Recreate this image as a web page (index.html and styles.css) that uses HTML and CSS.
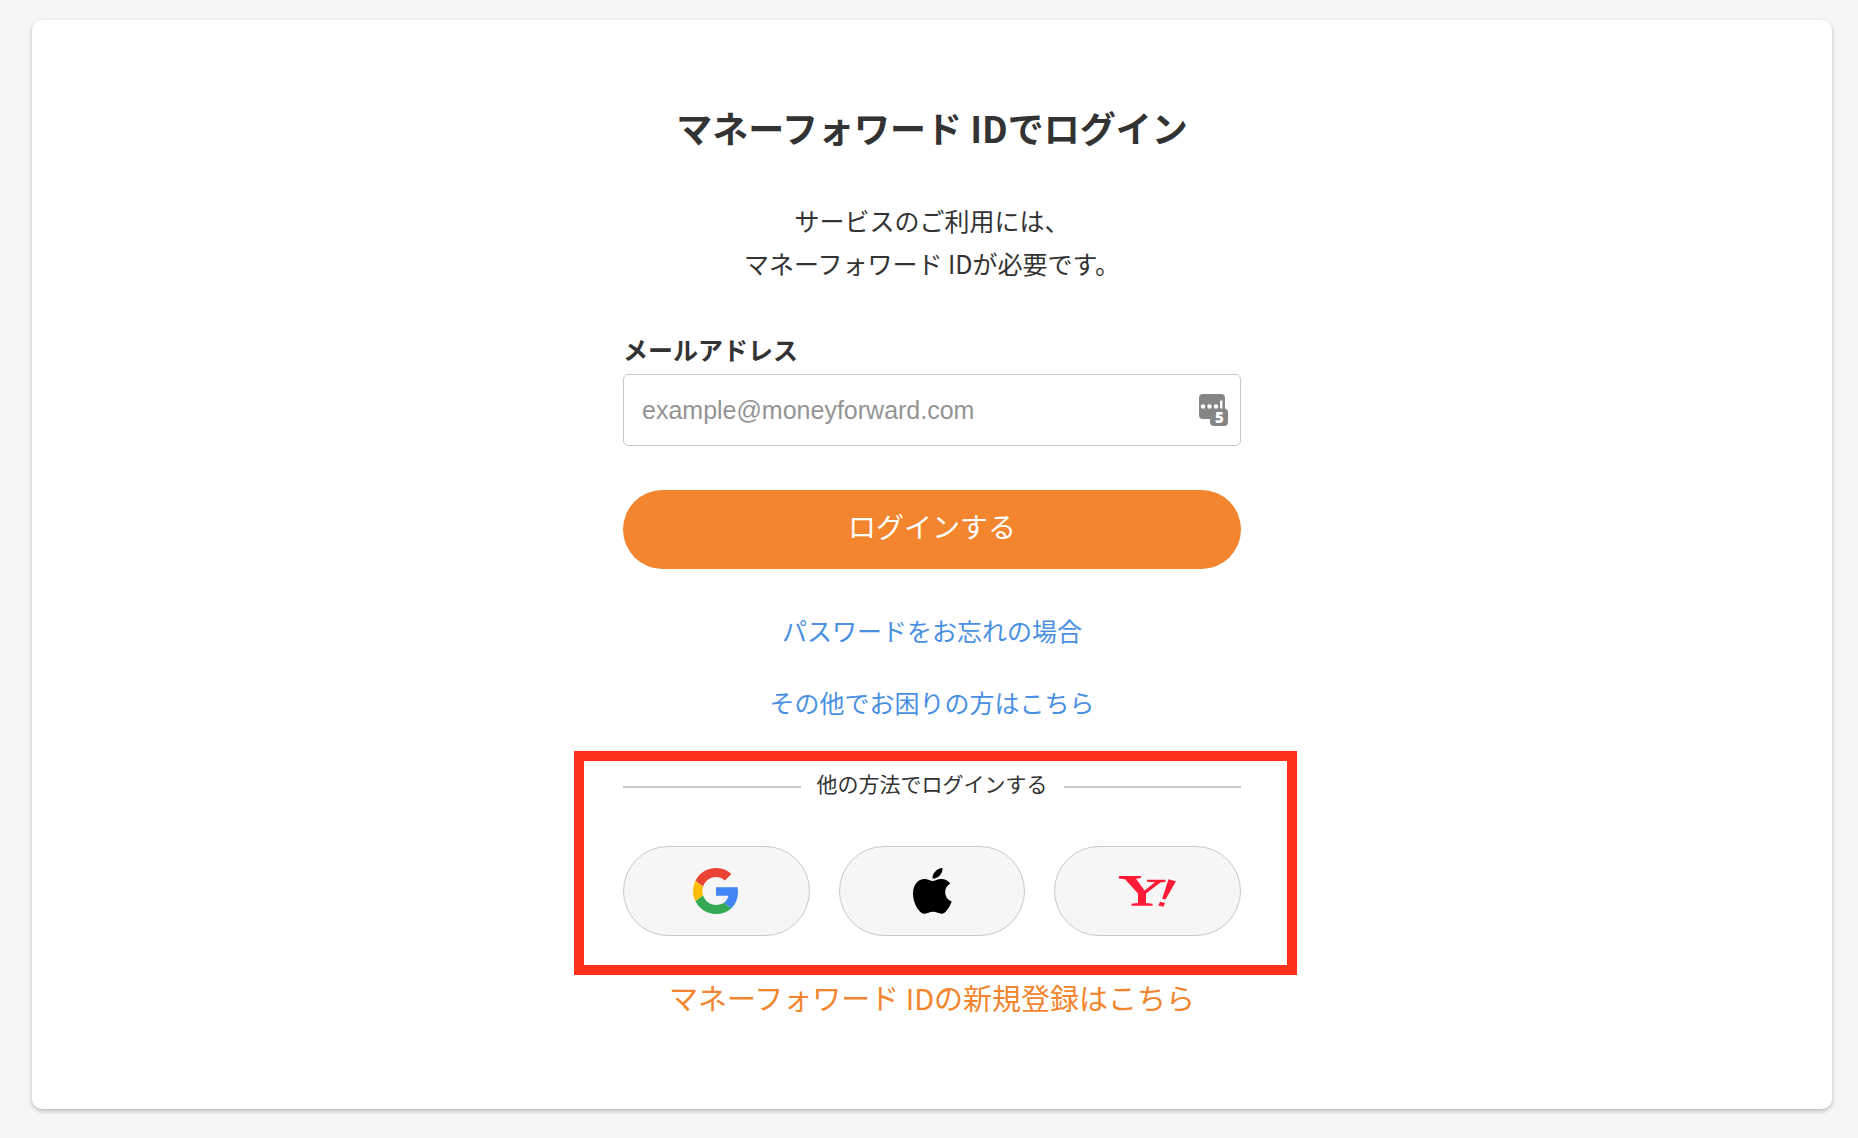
FILE: index.html
```html
<!DOCTYPE html>
<html lang="ja">
<head>
    <meta charset="UTF-8">
    <meta name="viewport" content="width=device-width, initial-scale=1.0">
    <title>マネーフォワード IDでログイン</title>
    <link rel="stylesheet" href="styles.css">
</head>
<body>
    <main class="card">
        <div class="login">
            <h1>マネーフォワード IDでログイン</h1>
            <p class="lead">サービスのご利用には、<br>マネーフォワード IDが必要です。</p>

            <form class="login-form">
                <label for="email">メールアドレス</label>
                <div class="field">
                    <input type="email" id="email" name="email" placeholder="example@moneyforward.com">
                    <svg class="field-icon" viewBox="0 0 29 32" aria-hidden="true">
                        <path fill="#858585" d="M4 0h18a4 4 0 0 1 4 4v10.500a4 4 0 0 1 3 4v9.500a4 4 0 0 1-4 4H15a4 4 0 0 1-4-4v-3H4a4 4 0 0 1-4-4V4a4 4 0 0 1 4-4z"/>
                        <circle cx="4" cy="12.500" r="2.200" fill="#fff"/>
                        <circle cx="10.500" cy="12.500" r="2.200" fill="#fff"/>
                        <circle cx="17" cy="12.500" r="2.200" fill="#fff"/>
                        <path fill="#fff" d="M21 6.500h2.400v8H21z"/>
                        <text x="20.500" y="29" text-anchor="middle">5</text>
                    </svg>
                </div>
                <button type="submit" class="btn-login">ログインする</button>
            </form>

            <nav class="help">
                <a href="#">パスワードをお忘れの場合</a>
                <a href="#">その他でお困りの方はこちら</a>
            </nav>

            <section class="other">
                <h2 class="divider">他の方法でログインする</h2>
                <div class="providers">
                    <button type="button" class="provider" aria-label="Google">
                        <svg width="46" height="46" viewBox="0 0 48 48">
                            <path fill="#ea4335" d="M24 9.500c3.540 0 6.710 1.220 9.210 3.600l6.850-6.850C35.900 2.380 30.470 0 24 0 14.620 0 6.510 5.380 2.560 13.220l7.980 6.190C12.430 13.720 17.740 9.500 24 9.500z"/>
                            <path fill="#4285f4" d="M46.980 24.550c0-1.570-.15-3.090-.38-4.550H24v9.020h12.940c-.58 2.960-2.260 5.480-4.780 7.180l7.730 6c4.510-4.180 7.090-10.360 7.090-17.650z"/>
                            <path fill="#fbbc05" d="M10.530 28.590A14.500 14.500 0 0 1 9.770 24c0-1.600.27-3.140.76-4.590l-7.980-6.190A23.900 23.900 0 0 0 0 24c0 3.880.92 7.540 2.560 10.780z"/>
                            <path fill="#34a853" d="M24 48c6.480 0 11.930-2.130 15.890-5.810l-7.730-6c-2.150 1.450-4.920 2.300-8.160 2.300-6.260 0-11.570-4.220-13.470-9.910l-7.980 6.190C6.510 42.620 14.620 48 24 48z"/>
                        </svg>
                    </button>
                    <button type="button" class="provider" aria-label="Apple">
                        <svg width="39" height="46" viewBox="0 0 39 46">
                            <path d="M29.500 0c.4 5.700-4.600 10.800-10 10.600C19 5.200 24.100.3 29.500 0z"/>
                            <path d="M19.600 13.100c2 0 4.900-2.200 9-2.200 3.500 0 6.700 1.700 8.700 4.700-3.500 2.200-5.100 5-5.100 8.700 0 4.200 2.500 7.700 6.500 9.300-1.300 4-4.800 9.700-7.600 11.500-3.600 1.800-6.800-1.300-11-1.300-4.400 0-6.500 2.700-10.400 1.600C5.200 43.900 0 34.300 0 25.800c0-9.700 5.700-14.700 11.300-14.700 3.600 0 6.400 2 8.300 2z"/>
                        </svg>
                    </button>
                    <button type="button" class="provider" aria-label="Yahoo! JAPAN">
                        <svg width="57" height="31" viewBox="0 0 57 31">
                            <g fill="#ff1a38">
                                <path d="M0 0h22v2l-5 .8 8.500 11.700L36 6.200 28 5.700v-2h18.500v2l-5 .8-14.500 11V27l6.500.7v2H12.500v-2L19 27v-9.500L6 3.200 0 2.500z"/>
                                <path d="M49.500 3.200l7.500 2-10.500 18.300-3.300-.8z"/>
                                <path d="M41 25.700l5 1.200-1.500 3.800-5.200-1.300z"/>
                            </g>
                        </svg>
                    </button>
                </div>
            </section>

            <a class="signup" href="#">マネーフォワード IDの新規登録はこちら</a>
        </div>
    </main>
</body>
</html>
```
FILE: styles.css
```css
* {
    margin: 0;
    padding: 0;
    box-sizing: border-box;
}

body {
    background: #f6f6f6;
    color: #333;
    font-family: "Noto Sans CJK JP", sans-serif;
    font-size: 25px;
    padding: 20px 26px 28px 32px;
}

a {
    text-decoration: none;
}

button {
    font-family: inherit;
    cursor: pointer;
}

.card {
    background: #fff;
    border-radius: 10px;
    box-shadow: 0 2px 4px rgba(0, 0, 0, 0.25);
    padding: 82px 20px 92px;
}

.login {
    display: flex;
    flex-direction: column;
    max-width: 618px;
    margin: 0 auto;
    text-align: center;
}

h1 {
    font-size: 36px;
    font-weight: 700;
    line-height: 50px;
    white-space: nowrap;
}

.lead {
    line-height: 43px;
    margin-top: 47px;
}

/* form */
.login-form {
    display: flex;
    flex-direction: column;
    margin-top: 48px;
    text-align: left;
}

.login-form label {
    font-weight: 700;
    line-height: 32px;
    margin-bottom: 9px;
}

.field {
    position: relative;
}

.field input {
    display: block;
    width: 100%;
    height: 72px;
    border: 1px solid #c8c8c8;
    border-radius: 5px;
    padding: 0 60px 0 18px;
    color: #333;
    font-family: "Liberation Sans", Arial, sans-serif;
    font-size: 25px;
}

.field input::placeholder {
    color: #949494;
}

.field-icon {
    position: absolute;
    top: 20px;
    right: 13px;
    width: 29px;
    height: 32px;
}

.field-icon text {
    fill: #fff;
    font-family: "Open Sans", sans-serif;
    font-size: 15px;
    font-weight: 800;
}

.btn-login {
    height: 79px;
    margin-top: 44px;
    border: none;
    border-radius: 40px;
    background: #f2852d;
    color: #fff;
    font-size: 28px;
    padding-bottom: 8px;
}

.help {
    display: flex;
    flex-direction: column;
    align-items: center;
    gap: 36px;
    margin-top: 43px;
    line-height: 36px;
}

.help a {
    color: #4a90e2;
}

/* other login methods */
.other {
    border: 10px solid #ff301c;
    margin: 31px -56px 0 -49px;
    padding: 6px 46px 29px 39px;
}

.divider {
    display: flex;
    align-items: center;
    gap: 16px;
    font-size: 21px;
    font-weight: 400;
    line-height: 32px;
}

.divider::before,
.divider::after {
    content: '';
    flex: 1;
    height: 2px;
    margin-top: 8px;
    background: #ccc;
}

.providers {
    display: flex;
    gap: 29px;
    margin-top: 47px;
}

.provider {
    display: flex;
    flex: 1;
    align-items: center;
    justify-content: center;
    height: 90px;
    border: 1px solid #c8c8c8;
    border-radius: 45px;
    background: #f6f6f6;
}

.signup {
    color: #f2852d;
    font-size: 29px;
    line-height: 40px;
    margin-top: 2px;
}
```
